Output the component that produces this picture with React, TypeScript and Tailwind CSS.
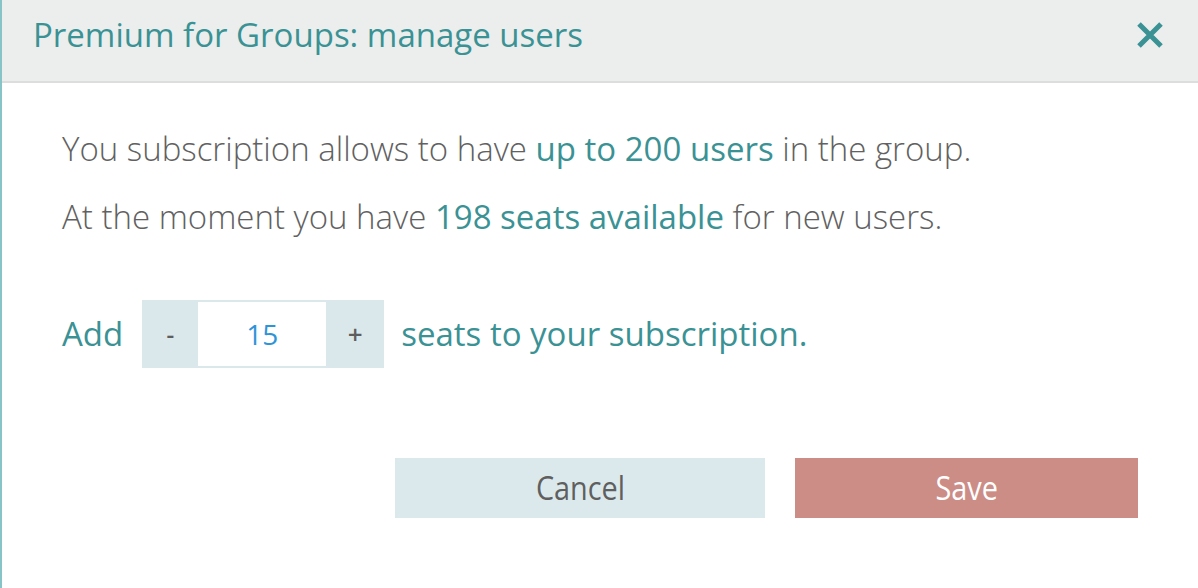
export default function App() {
  return (
    <div className="h-[588px] w-[1198px] overflow-hidden border-l-2 border-[#86c4c7] bg-white font-['Open_Sans',sans-serif]">
      {/* header */}
      <div className="flex h-[83px] items-center justify-between border-b-2 border-[#dddddd] bg-[#ebeeed] pl-[31px] pr-[34px]">
        <h1 className="pb-[12px] text-[33px] font-normal leading-none text-[#3a9294]">
          Premium for Groups: manage users
        </h1>
        <button className="pb-[12px] text-[#3a9294]">
          <svg width="28" height="28" viewBox="0 0 28 28" fill="none">
            <path d="M3 3 L25 25 M25 3 L3 25" stroke="currentColor" strokeWidth="5" />
          </svg>
        </button>
      </div>

      {/* body */}
      <div className="pl-[60px] pr-[60px] pt-[46px]">
        <p className="text-[33px] font-light leading-[40px] text-[#616161]">
          You subscription allows to have{" "}
          <span className="font-normal text-[#3a9294]">up to 200 users</span> in the group.
        </p>
        <p className="mt-[28px] text-[33px] font-light leading-[40px] text-[#616161]">
          At the moment you have{" "}
          <span className="font-normal text-[#3a9294]">198 seats available</span> for new users.
        </p>

        <div className="mt-[63px] flex items-center text-[33px] text-[#3a9294]">
          <span className="mr-[19px]">Add</span>
          <div className="flex h-[68px] items-stretch bg-[#dbe8eb]">
            <button className="w-[56px] text-[24px] font-semibold text-[#5e5e5e]">-</button>
            <div className="my-[2px] flex w-[128px] items-center justify-center bg-white text-[28px] text-[#2e94d8]">
              15
            </div>
            <button className="w-[58px] text-[26px] font-semibold text-[#5e5e5e]">+</button>
          </div>
          <span className="ml-[17px]">seats to your subscription.</span>
        </div>

        <div className="mt-[90px] flex justify-end gap-[30px]">
          <button className="h-[60px] w-[370px] bg-[#dbe9ec] text-[32px] text-[#5f5f5f]">
            <span className="inline-block scale-x-[0.9]">Cancel</span>
          </button>
          <button className="h-[60px] w-[343px] bg-[#cc8d86] text-[32px] text-white">
            <span className="inline-block scale-x-[0.9]">Save</span>
          </button>
        </div>
      </div>
    </div>
  );
}
